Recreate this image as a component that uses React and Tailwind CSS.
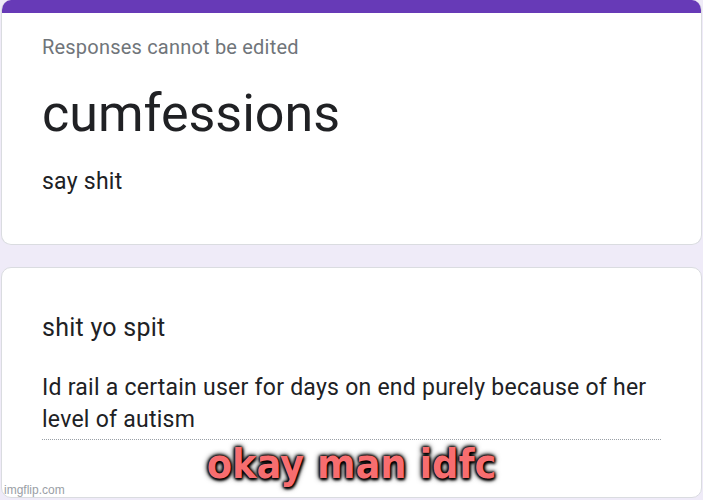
export default function App() {
  return (
    <div className="relative w-[703px] h-[500px] overflow-hidden bg-[#efebf8] font-['Roboto','Liberation_Sans',sans-serif] text-[#202124]">
      {/* header card */}
      <div className="ml-[1px] mr-[1px] h-[245px] bg-white border border-t-0 border-[#dadce0] rounded-[10px] overflow-hidden">
        <div className="h-[13px] bg-[#673ab7]" />
        <div className="pl-[40px] pr-10">
          <p className="mt-[22px] text-[20px] leading-[24px] tracking-[0.2px] text-[#70757a]">Responses cannot be edited</p>
          <h1 className="mt-[25px] text-[52px] leading-[60px]">cumfessions</h1>
          <p className="mt-[22px] text-[23px] leading-[32px] tracking-[0.25px]">say shit</p>
        </div>
      </div>

      {/* question card */}
      <div className="mt-[22px] ml-[1px] mr-[1px] h-[231px] bg-white border border-[#dadce0] rounded-[10px] pl-[40px] pr-[40px]">
        <p className="mt-[44px] text-[25px] leading-[32px] tracking-[0.25px]">shit yo spit</p>
        <p className="mt-[28px] text-[23px] leading-[32px] tracking-[0.25px]">
          Id rail a certain user for days on end purely because of her level of autism
        </p>
        <div className="mt-[3px] border-b border-dotted border-[#9aa0a6]" />
      </div>

      {/* meme caption */}
      <div className="absolute left-0 right-0 top-[437px] text-center font-['DejaVu_Sans_Condensed','DejaVu_Sans',sans-serif] font-bold text-[41px] leading-[54px] text-[#f76d6f] [text-shadow:0_0_2px_#000,0_0_3px_#000,0_0_4px_#000,0_0_6px_#000,1px_2px_3px_#000]">
        okay man idfc
      </div>

      <span className="absolute left-[4px] top-[482px] text-[12px] leading-[16px] text-[#9aa0a6] font-['Liberation_Sans',sans-serif]">
        imgflip.com
      </span>
    </div>
  );
}
